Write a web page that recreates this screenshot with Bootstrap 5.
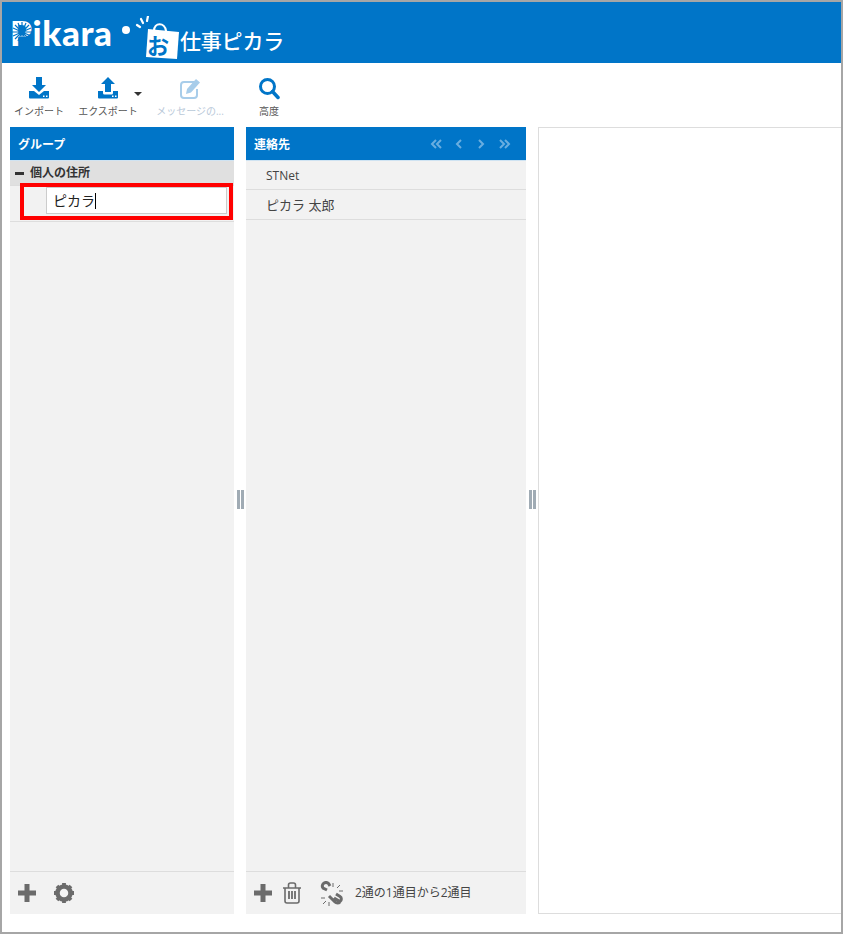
<!DOCTYPE html>
<html lang="ja"><head><meta charset="utf-8"><title>連絡先</title>
<link href="https://cdn.jsdelivr.net/npm/bootstrap@5.3.0/dist/css/bootstrap.min.css" rel="stylesheet">
<style>
html,body{height:100%;margin:0}
body{font-family:"Open Sans","Noto Sans CJK JP",sans-serif;font-size:12px;color:#333;background:#fff;overflow:hidden}
.shell{height:934px;width:843px;border:2px solid #a6a6a6;overflow:hidden;position:relative}
.topbar{height:61px;background:#0075c8;color:#fff;padding-left:8px;position:relative}
.logo-word{font-family:"Lato",sans-serif;font-weight:900;font-size:35px;line-height:1;letter-spacing:.6px;margin-top:13px;width:107px;white-space:nowrap}
.logo-dot{width:8px;height:8px;border-radius:50%;background:#fff;margin:24px 0 0 5px}
.logo-bag{margin:14px 0 0 5px;width:46px;height:44px;position:relative}
.logo-o{position:absolute;left:12px;top:17px;font:700 22px/1 "Noto Sans CJK JP",sans-serif;color:#0075c8}
.logo-job{font:500 21px/1 "Noto Sans CJK JP",sans-serif;margin:28px 0 0 -1px;letter-spacing:-.2px;white-space:nowrap}
.sun{position:absolute;left:8px;top:19px}
.tools{height:64px;padding-left:8px}
.tool{display:flex;flex-direction:column;align-items:center;font-size:10px;line-height:13px;color:#555;padding-top:13px;white-space:nowrap}
.tool svg{height:25px;display:block}
.tool span{margin-top:4px}
.t1{width:58px}.t2{width:60px;margin-left:10px;position:relative}.t3{width:80px;margin-left:12px;color:#b9c9d9}.t4{width:30px;margin-left:24px}
.drop{position:absolute;right:-4px;top:29px;width:0;height:0;border:4px solid transparent;border-top:4px solid #333;border-bottom:0}
.desk{height:787px;padding-left:8px}
.pane{background:#f2f2f2;display:flex;flex-direction:column;height:100%}
.p1{width:224px;position:relative}.p2{width:280px}.p3{flex:1 1 auto;background:#fff;border:1px solid #ddd;margin-right:-2px}
.gut{width:12px;padding-bottom:42px}
.gut i{display:block;width:3px;height:19px;background:#a0abb4;margin:0 .5px}
.phead{height:34px;background:#0075c8;color:#fff;font-weight:700;font-size:12px;padding:0 8px;border-bottom:1px solid #cfe3f2;line-height:35px;flex:none}
.arrows{gap:0;margin-right:0}
.arrows svg{display:block;margin-top:11px}
.grp{height:25px;background:#e0e0e0;font-weight:600;padding-left:5px;color:#333;line-height:28px;border-bottom:1px solid #ddd;flex:none}
.minus{width:9px;height:3px;background:#333;margin-right:6px;margin-top:1px}
.sub{height:36px;border-bottom:1px solid #ddd;padding:1px 7px 0 36px;flex:none}
.fld{height:27px;background:#fff;border:1px solid #ccc;font-size:14px;line-height:25px;padding-left:6px;color:#222}
.caret-bar{display:inline-block;width:1px;height:16px;background:#000;vertical-align:-3px}
.mark-red{position:absolute;left:10px;top:56px;width:213px;height:37px;border:4px solid #f00;pointer-events:none}
.ct{height:29px;border-bottom:1px solid #ddd;padding-left:20px;line-height:30px;color:#444;font-size:12px;flex:none}
.ct2{height:30px;font-size:13px}
.pfoot{height:43px;border-top:1px solid #ddd;margin-top:auto;flex:none;padding-left:7px}
.pager{font-size:12px;color:#444;margin-left:11px;white-space:nowrap}
</style></head><body>
<div class="shell d-flex flex-column">
 <header class="topbar d-flex">
  <div class="logo-word">Pikara</div>
  <svg class="sun" width="24" height="26" viewBox="0 0 24 26" stroke="#0075c8" stroke-width="1.2"><circle cx="12" cy="11" r="2.6" fill="#0075c8" stroke="none"/><path d="M12 1v20M2 11h20M5 4l14 14M19 4L5 18M8 2l8 18M16 2L8 20M3 7l18 8M21 7L3 15"/></svg>
  <div class="logo-dot"></div>
  <div class="logo-bag">
   <svg width="46" height="44" viewBox="0 0 46 44"><g stroke="#fff" stroke-width="2.2" fill="none" stroke-linecap="round"><path d="M2 9l3 2M6 3l2 4M13 0l-1 5"/><path d="M19 15c0-9 11-9 12 0"/></g><path d="M13 13l31 3-2 27-31-2z" fill="#fff"/></svg>
   <span class="logo-o">お</span>
  </div>
  <div class="logo-job">仕事ピカラ</div>
 </header>
 <nav class="tools d-flex">
  <div class="tool t1"><svg width="22" height="25" viewBox="0 0 22 25" fill="#0075c8"><path d="M8 1h6v8h4l-7 7-7-7h4z"/><path d="M1 15h5l5 4 5-4h5v6.500a1 1 0 0 1-1 1H2a1 1 0 0 1-1-1z"/><path d="M15 19.500h1.500v1.500H15zM18 19.500h1.500v1.500H18z" fill="#fff"/></svg><span>インポート</span></div>
  <div class="tool t2"><svg width="22" height="25" viewBox="0 0 22 25" fill="#0075c8"><path d="M11 1l7 7h-4v8H8V8H4z"/><path d="M1 15h5v2a1.500 1.500 0 0 0 1.500 1.500h7A1.500 1.500 0 0 0 16 17v-2h5v6.500a1 1 0 0 1-1 1H2a1 1 0 0 1-1-1z"/><path d="M15 19.500h1.500v1.500H15zM18 19.500h1.500v1.500H18z" fill="#fff"/></svg><span>エクスポート</span><b class="drop"></b></div>
  <div class="tool t3"><svg width="22" height="25" viewBox="0 0 22 25"><path d="M15 6H5a3 3 0 0 0-3 3v10a3 3 0 0 0 3 3h10a3 3 0 0 0 3-3v-6" fill="none" stroke="#a8cdea" stroke-width="2"/><path d="M8 13l9-10 4 3.500-9 10-5 1.500z" fill="#a8cdea"/></svg><span>メッセージの...</span></div>
  <div class="tool t4"><svg width="22" height="25" viewBox="0 0 22 25"><circle cx="9.500" cy="10.500" r="7" fill="none" stroke="#0075c8" stroke-width="3"/><path d="M14.500 15.500l5.500 6" stroke="#0075c8" stroke-width="3.500" stroke-linecap="round"/></svg><span>高度</span></div>
 </nav>
 <main class="desk d-flex">
  <section class="pane p1">
   <div class="phead">グループ</div>
   <div class="grp d-flex align-items-center"><b class="minus"></b><span>個人の住所</span></div>
   <div class="sub"><div class="fld">ピカラ<span class="caret-bar"></span></div></div>
   <div class="mark-red"></div>
   <div class="pfoot d-flex align-items-center">
    <svg width="20" height="20" viewBox="0 0 20 20" fill="#6b6b6b"><path d="M7.500 1h5v6.500H19v5h-6.500V19h-5v-6.500H1v-5h6.500z"/></svg>
    <svg class="ms-3" width="22" height="22" viewBox="0 0 22 22"><circle cx="11" cy="11" r="6.500" fill="none" stroke="#6b6b6b" stroke-width="4.500"/><path d="M11 1v20M1 11h20M4 4l14 14M18 4L4 18" stroke="#6b6b6b" stroke-width="3.800" stroke-dasharray="3.500 13"/></svg>
   </div>
  </section>
  <div class="gut d-flex align-items-center justify-content-center"><i></i><i></i></div>
  <section class="pane p2">
   <div class="phead d-flex justify-content-between"><span>連絡先</span>
    <div class="arrows d-flex">
     <svg width="22" height="12" viewBox="0 0 22 12" fill="none" stroke="#69aee0" stroke-width="2"><path d="M10 2L6 6l4 4M15 2l-4 4 4 4"/></svg>
     <svg width="22" height="12" viewBox="0 0 22 12" fill="none" stroke="#69aee0" stroke-width="2"><path d="M13 2L9 6l4 4"/></svg>
     <svg width="22" height="12" viewBox="0 0 22 12" fill="none" stroke="#69aee0" stroke-width="2"><path d="M9 2l4 4-4 4"/></svg>
     <svg width="26" height="12" viewBox="0 0 26 12" fill="none" stroke="#69aee0" stroke-width="2"><path d="M8 2l4 4-4 4M13 2l4 4-4 4"/></svg>
    </div></div>
   <div class="ct">STNet</div>
   <div class="ct ct2">ピカラ 太郎</div>
   <div class="pfoot d-flex align-items-center">
    <svg width="20" height="20" viewBox="0 0 20 20" fill="#6b6b6b"><path d="M7.500 1h5v6.500H19v5h-6.500V19h-5v-6.500H1v-5h6.500z"/></svg>
    <svg class="ms-2" style="margin-left:7px" width="22" height="22" viewBox="0 0 22 22" fill="none" stroke="#6b6b6b" stroke-width="1.600"><path d="M2 6h18M4 6v13a2 2 0 0 0 2 2h10a2 2 0 0 0 2-2V6M7.500 6V3a2 2 0 0 1 2-2h3a2 2 0 0 1 2 2v3"/><path d="M8 9v8M11 9v8M14 9v8" stroke-width="1.800"/></svg>
    <svg class="ms-3" width="25" height="25" viewBox="0 0 25 25" fill="none" stroke="#6b6b6b"><path d="M8 9L4 7a3.500 3.500 0 0 1 0-4l.5-.5a3.500 3.500 0 0 1 5 0L11 5M15 17l6 3.500a3 3 0 0 0 0-5L17 13M10 15l6 6a3.500 3.500 0 0 0 5 0" stroke-width="3"/><path d="M14 2v4M21 4l-3 3M24 10h-4M2 17h4M4 23l3-3M10 25v-4" stroke-width="1"/></svg>
    <span class="pager">2通の1通目から2通目</span>
   </div>
  </section>
  <div class="gut d-flex align-items-center justify-content-center"><i></i><i></i></div>
  <section class="pane p3"></section>
 </main>
</div>
<script src="https://cdn.jsdelivr.net/npm/bootstrap@5.3.0/dist/js/bootstrap.bundle.min.js"></script>
</body></html>
